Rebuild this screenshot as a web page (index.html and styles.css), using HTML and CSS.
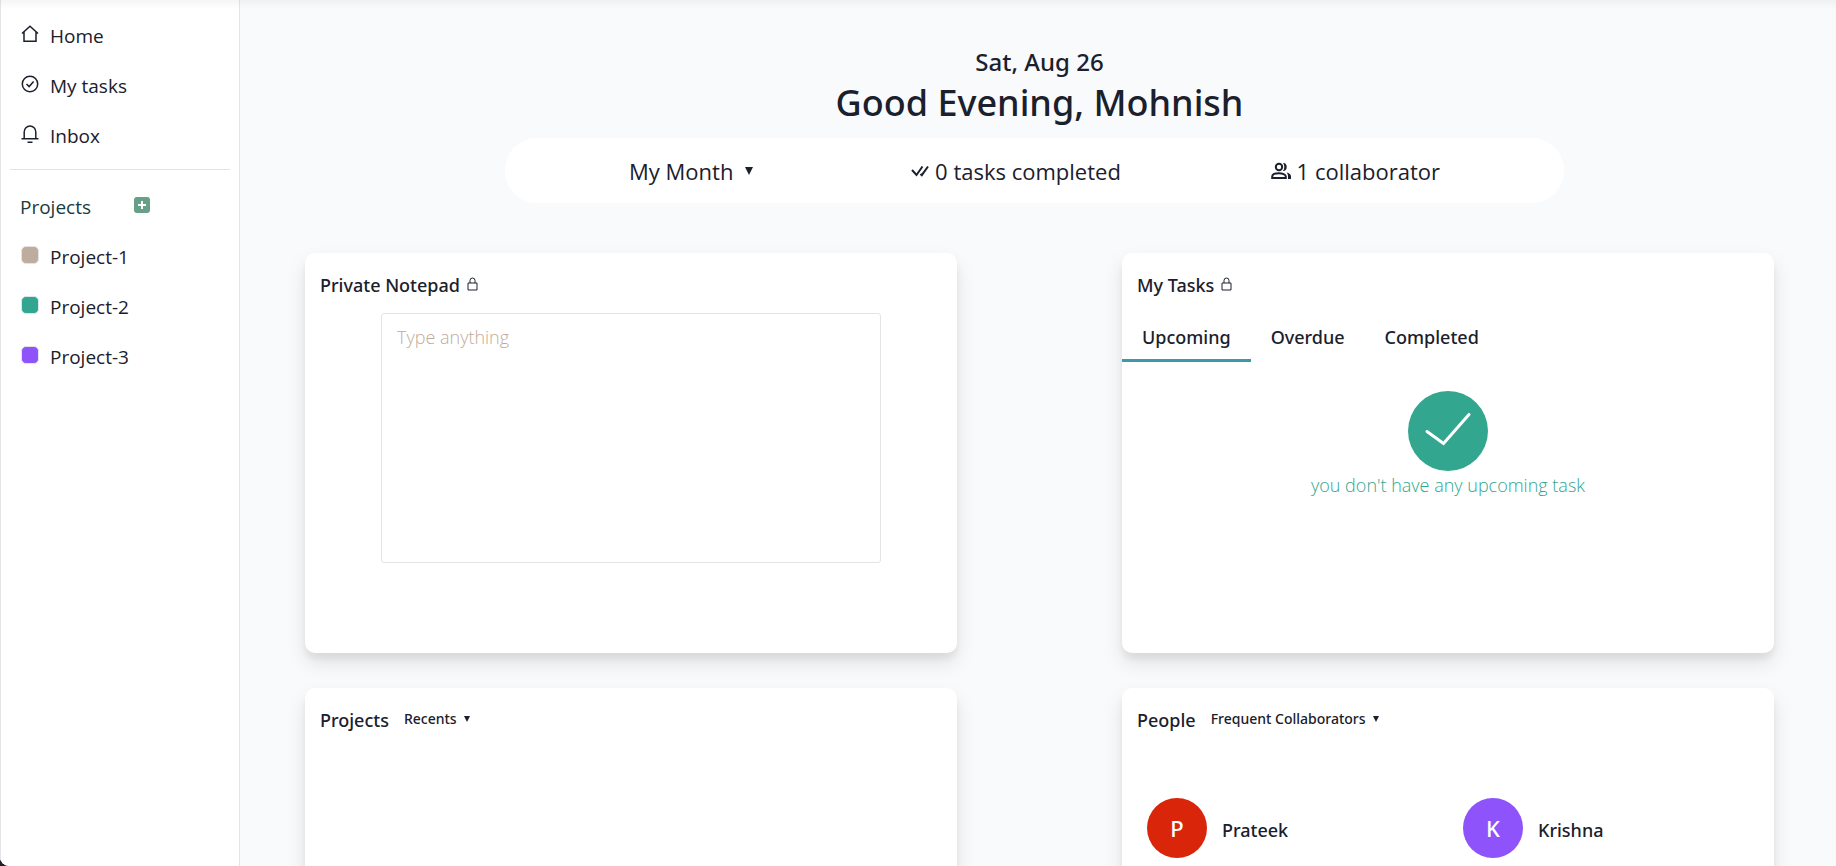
FILE: index.html
```html
<!DOCTYPE html>
<html lang="en">
<head>
<meta charset="utf-8">
<title>Home</title>
<link rel="stylesheet" href="styles.css">
</head>
<body>
<div class="app">
  <nav class="sidebar" aria-label="Main">
    <a class="nav-item" href="#home">
      <svg class="icon" viewBox="0 0 18 18"><path d="M1 8.500 9 1.200l8 7.300M3 7v9.300h12V7" /></svg>
      <span>Home</span></a>
    <a class="nav-item" href="#tasks">
      <svg class="icon" viewBox="0 0 18 18"><circle cx="9" cy="9" r="7.700"/><path d="m5.500 9 2.600 2.600 4.500-5"/></svg>
      <span>My tasks</span></a>
    <a class="nav-item" href="#inbox">
      <svg class="icon" viewBox="0 0 18 18"><path d="M3.200 13.500V7a5.800 6 0 0 1 11.600 0v6.500M.5 13.800h17M6.500 17.200h5"/></svg>
      <span>Inbox</span></a>
    <hr class="divider">
    <div class="projects-head">
      <h2 class="projects-title">Projects</h2>
      <button class="add" type="button" aria-label="Add project"><svg viewBox="0 0 16 16"><path d="M8 4v8M4 8h8"/></svg></button>
    </div>
    <a class="nav-item" href="#p1"><i class="swatch tan"></i><span>Project-1</span></a>
    <a class="nav-item" href="#p2"><i class="swatch green"></i><span>Project-2</span></a>
    <a class="nav-item" href="#p3"><i class="swatch purple"></i><span>Project-3</span></a>
  </nav>

  <main class="main">
    <header class="greeting">
      <p class="date">Sat, Aug 26</p>
      <h1 class="hello">Good Evening, Mohnish</h1>
    </header>
    <div class="stats">
      <button class="stat month" type="button">My Month <svg class="caret" viewBox="0 0 8 8"><path d="M0 0h8L4 8z"/></svg></button>
      <div class="stat"><svg class="stat-icon" viewBox="0 0 18 18"><path d="m1 8 4.500 5 6-8.500M9.500 12l1.300 1.200L17 4.500"/></svg>0 tasks completed</div>
      <div class="stat"><svg class="stat-icon people-icon" viewBox="0 0 20 18"><circle cx="8" cy="5" r="3.200"/><path d="M1.200 16v-1.500c0-4.300 13.600-4.300 13.600 0V16z"/><path class="solid" d="M12 1c5-.5 5 8.500 0 8 1.800-2 1.800-6 0-8zM15.500 10.500c2.800.6 4.500 2 4.500 4V17h-3v-2.500c0-1.600-.5-3-1.500-4z"/></svg>1 collaborator</div>
    </div>

    <div class="cards">
      <section class="card">
        <h2 class="card-title"><label for="note">Private Notepad</label> <svg class="lock" viewBox="0 0 11 14"><path d="M1 6h9v7H1zM3 6V3.500a2.500 2.500 0 0 1 5 0V6"/></svg></h2>
        <textarea class="note" id="note" placeholder="Type anything"></textarea>
      </section>
      <section class="card">
        <h2 class="card-title">My Tasks <svg class="lock" viewBox="0 0 11 14"><path d="M1 6h9v7H1zM3 6V3.500a2.500 2.500 0 0 1 5 0V6"/></svg></h2>
        <div class="tabs" role="tablist">
          <button class="tab active" role="tab" aria-selected="true" type="button">Upcoming</button>
          <button class="tab" role="tab" aria-selected="false" type="button">Overdue</button>
          <button class="tab" role="tab" aria-selected="false" type="button">Completed</button>
        </div>
        <div class="empty">
          <svg class="done" viewBox="0 0 80 80"><circle cx="40" cy="40" r="40"/><path d="M19 40.500 35.500 52.500 61 23.500"/></svg>
          <p class="empty-text">you don't have any upcoming task</p>
        </div>
      </section>
      <section class="card">
        <div class="card-head">
          <h2 class="card-title">Projects</h2>
          <button class="filter" type="button">Recents <svg class="caret-sm" viewBox="0 0 6 6"><path d="M0 0h6L3 6z"/></svg></button>
        </div>
      </section>
      <section class="card">
        <div class="card-head">
          <h2 class="card-title">People</h2>
          <button class="filter" type="button">Frequent Collaborators <svg class="caret-sm" viewBox="0 0 6 6"><path d="M0 0h6L3 6z"/></svg></button>
        </div>
        <div class="people">
          <div class="person"><span class="avatar red">P</span><span class="name">Prateek</span></div>
          <div class="person"><span class="avatar violet">K</span><span class="name">Krishna</span></div>
        </div>
      </section>
    </div>
  </main>
  <div class="top-shadow"></div>
</div>
</body>
</html>
```
FILE: styles.css
```css
* { box-sizing: border-box; margin: 0; padding: 0; }
html { background: #1a202c; }
body {
  color: #1a202c;
  font-family: "Open Sans", "Noto Sans", sans-serif;
  font-size: 18px;
  line-height: 24px;
}
button { border: 0; background: none; color: inherit; font: inherit; cursor: pointer; }
a { color: inherit; text-decoration: none; }
svg { fill: none; stroke: currentColor; flex: none; }

.app {
  position: relative;
  display: flex;
  height: 100vh;
  overflow: hidden;
  background: #f9fafc;
  border-bottom-left-radius: 9px;
}
.top-shadow {
  position: absolute;
  top: 0;
  left: 0;
  right: 0;
  height: 9px;
  background: linear-gradient(rgba(0, 0, 0, 0.04), transparent);
  pointer-events: none;
}

.sidebar {
  flex: 0 0 240px;
  padding-top: 11px;
  background: #fff;
  border: solid #e2e4e8;
  border-width: 0 1px;
  font-size: 19px;
}
.nav-item { display: flex; align-items: center; gap: 11px; height: 50px; padding: 0 20px; }
.icon { width: 18px; height: 18px; margin-bottom: 4px; stroke-width: 1.500; }
.divider { margin: 8px 9px 12px; border: 0; border-top: 1px solid #e2e4e8; }
.projects-head { display: flex; align-items: center; justify-content: space-between; height: 50px; padding: 0 89px 0 19px; }
.projects-title { color: #173b40; font-size: 19px; font-weight: 400; }
.add { display: flex; width: 16px; height: 16px; margin-bottom: 4px; border-radius: 3px; background: #689f88; color: #fff; }
.add svg { width: 16px; height: 16px; stroke-width: 2; }
.swatch { width: 18px; height: 18px; margin-bottom: 4px; border: 1px solid #e2e4e8; border-radius: 5px; }
.tan { background: #bfac9c; }
.green { background: #32a68e; }
.purple { background: #8e53fa; }

.main { flex: 1; min-width: 0; padding: 47px 62px 0 65px; }
.greeting { text-align: center; }
.date, .hello, .card-title, .tab, .filter, .person { font-family: "Noto Sans", "Open Sans", sans-serif; font-weight: 500; }
.date { font-size: 24px; line-height: 30px; }
.hello { font-size: 36px; line-height: 52px; }
.stats {
  display: flex;
  align-items: center;
  justify-content: space-between;
  height: 65px;
  margin: 9px 210px 50px 200px;
  padding: 0 124px;
  border-radius: 32px;
  background: #fff;
  font-size: 22px;
}
.stat { display: flex; align-items: center; gap: 6px; }
.month { gap: 12px; padding-right: 8px; }
.caret { width: 8px; height: 8px; fill: currentColor; stroke: none; }
.stat-icon { width: 18px; height: 18px; stroke-width: 2; }
.people-icon { width: 20px; }
.solid { fill: currentColor; stroke: none; }

.cards { display: grid; grid-template-columns: repeat(2, 1fr); gap: 35px 165px; }
.card {
  height: 400px;
  border-radius: 10px;
  background: #fff;
  box-shadow: 0 10px 20px rgba(0, 0, 0, 0.1), 0 6px 6px rgba(0, 0, 0, 0.05);
}
.card-title { padding: 20px 15px 0; font-size: 18px; line-height: 24px; }
.lock { width: 11px; height: 14px; margin-left: 2px; vertical-align: 1px; }
.note {
  display: block;
  width: 500px;
  max-width: 90%;
  height: 250px;
  margin: 16px auto 0;
  padding: 11px 15px;
  border: 1px solid #e2e4e8;
  border-radius: 3px;
  background: none;
  color: inherit;
  font: inherit;
  font-weight: 300;
  line-height: 24px;
  resize: none;
}
.note::placeholder { color: #bfac9c; opacity: 1; }

.tabs { display: flex; margin-top: 16px; }
.tab { height: 49px; padding: 2px 20px 0; border-bottom: 3px solid transparent; }
.active { border-color: #3d99a7; }
.empty { margin-top: 29px; text-align: center; color: #32a68e; font-weight: 300; }
.done { display: block; width: 80px; height: 80px; margin: 0 auto 2px; }
.done circle { fill: #32a68e; stroke: none; }
.done path { stroke: #fff; stroke-width: 3; stroke-linecap: round; }

.card-head { display: flex; }
.filter { display: flex; align-items: center; gap: 7px; height: 24px; margin-top: 19px; font-size: 14px; }
.caret-sm { width: 6px; height: 6px; fill: currentColor; stroke: none; }
.people { display: grid; grid-template-columns: repeat(2, 1fr); padding: 66px 10px 0; }
.person { display: flex; align-items: center; gap: 15px; padding: 0 15px; }
.name { padding-top: 3px; }
.avatar { display: grid; place-items: center; width: 60px; height: 60px; border-radius: 50%; color: #fff; font-size: 22px; }
.red { background: #d9260b; }
.violet { background: #8e53fa; }
```
